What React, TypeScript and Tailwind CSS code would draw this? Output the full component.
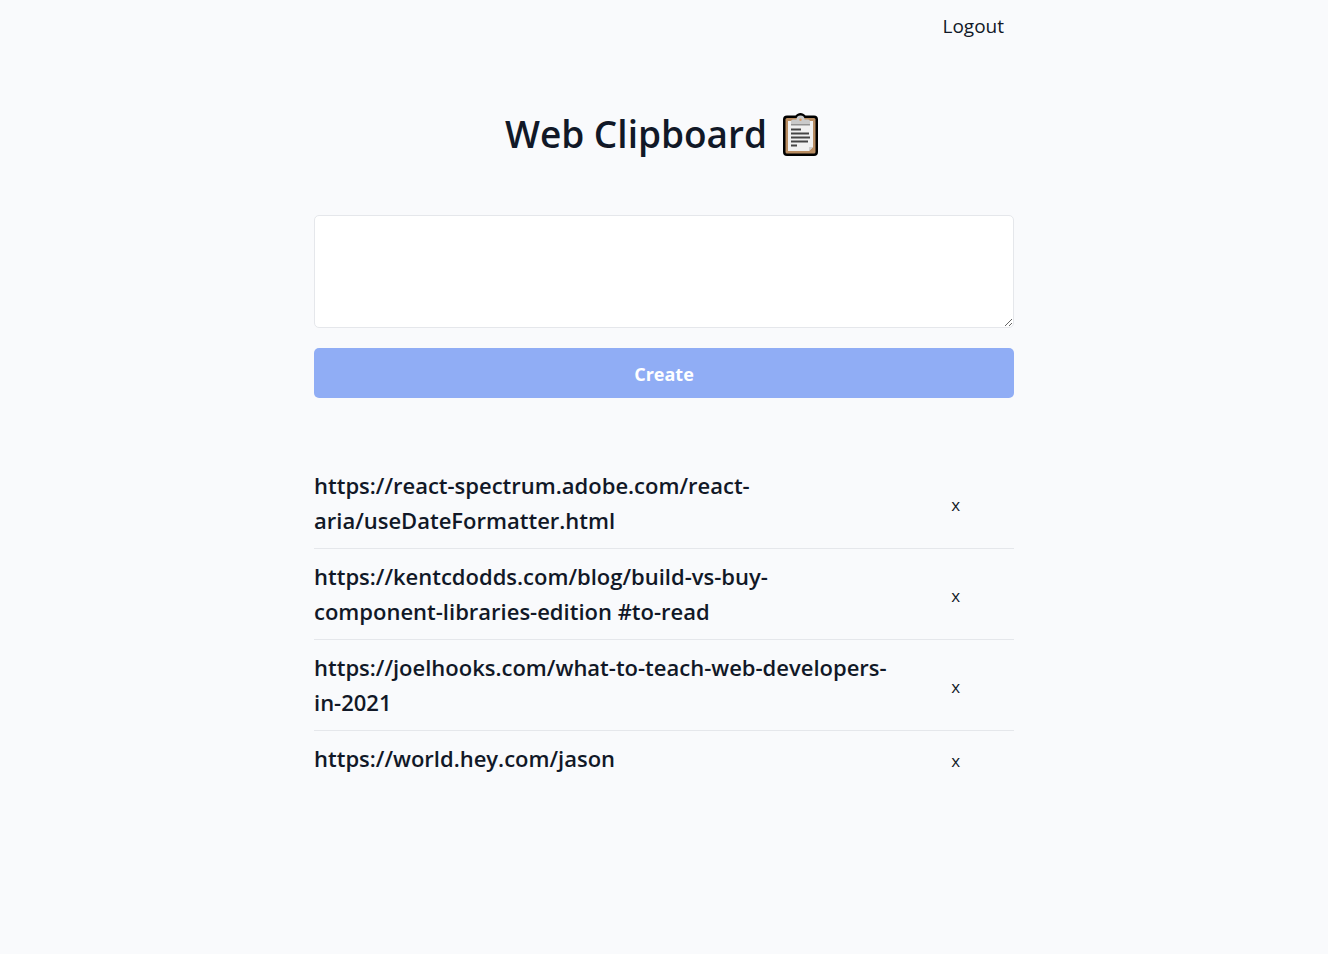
import { useState } from "react";

const initialClips = [
  "https://react-spectrum.adobe.com/react-aria/useDateFormatter.html",
  "https://kentcdodds.com/blog/build-vs-buy-component-libraries-edition #to-read",
  "https://joelhooks.com/what-to-teach-web-developers-in-2021",
  "https://world.hey.com/jason",
];

function ClipboardIcon() {
  return (
    <svg viewBox="0 -4 40 49" className="h-[49px] w-10 shrink-0" aria-hidden="true">
      <path
        d="M4 2.5h8.5C14 1 15.500 0 17.500 0s3.500 1 5 2.500H31a4 4 0 0 1 4 4V39a4 4 0 0 1-4 4H4a4 4 0 0 1-4-4V6.500a4 4 0 0 1 4-4z"
        fill="#000"
      />
      <rect x="2.500" y="5" width="30" height="35.500" rx="1.500" fill="#b98d62" />
      <rect x="5" y="8" width="25" height="30" fill="#f0f0f0" />
      <path d="M30 34v4h-4z" fill="#b98d62" />
      <path d="M26 38v-4h4z" fill="#cfcfcf" />
      <path d="M8 12V8.500a2 2 0 0 1 2-2h3.500a4 4 0 0 1 8 0H25a2 2 0 0 1 2 2V12z" fill="#cacaca" />
      <path d="M8 11h19v1.500H8z" fill="#929292" />
      <circle cx="17.500" cy="6.800" r="1.200" fill="#d99c68" />
      <path d="M8 16.500h10M8 20.500h18M8 24.500h19M8 28.500h17M8 32.500h6" stroke="#444" strokeWidth="2" />
    </svg>
  );
}

export default function App() {
  const [clips, setClips] = useState(initialClips);
  const [text, setText] = useState("");

  function create() {
    setClips([text.trim(), ...clips]);
    setText("");
  }

  return (
    <div className="min-h-screen bg-[#f9fafc] px-5 font-['Open_Sans','Noto_Sans',sans-serif] text-[#111827]">
      <div className="mx-auto max-w-[700px]">
        <nav className="flex justify-end px-2.5 py-3">
          <a href="#logout" className="text-[19px] leading-7">
            Logout
          </a>
        </nav>

        <main className="pt-14">
          <h1 className="flex items-center justify-center gap-4 text-[37px] leading-[51px] font-semibold">
            Web Clipboard
            <ClipboardIcon />
          </h1>

          <form
            className="mt-14 flex flex-col gap-5"
            onSubmit={(event) => {
              event.preventDefault();
              create();
            }}
          >
            <textarea
              aria-label="New clip"
              rows={3}
              value={text}
              onChange={(event) => setText(event.target.value)}
              className="block h-[113px] w-full rounded-[5px] border border-[#e5e7eb] bg-white px-4 py-2 text-xl outline-none"
            />
            <button
              type="submit"
              disabled={!text.trim()}
              className="h-[50px] w-full rounded-[5px] bg-[#2563eb] pt-0.5 text-lg font-bold text-white disabled:bg-[#90adf5]"
            >
              Create
            </button>
          </form>

          <ul className="mt-15 divide-y divide-[#e5e7eb]">
            {clips.map((clip, index) => (
              <li key={`${index}-${clip}`} className="grid grid-cols-6 items-center py-2.5">
                <p className="col-span-5 pr-2 text-[22px] leading-[35px] font-semibold">{clip}</p>
                <button
                  type="button"
                  aria-label={`Delete ${clip}`}
                  onClick={() => setClips(clips.filter((_, i) => i !== index))}
                  className="pt-1 text-[17px] leading-6"
                >
                  x
                </button>
              </li>
            ))}
          </ul>
        </main>
      </div>
    </div>
  );
}
